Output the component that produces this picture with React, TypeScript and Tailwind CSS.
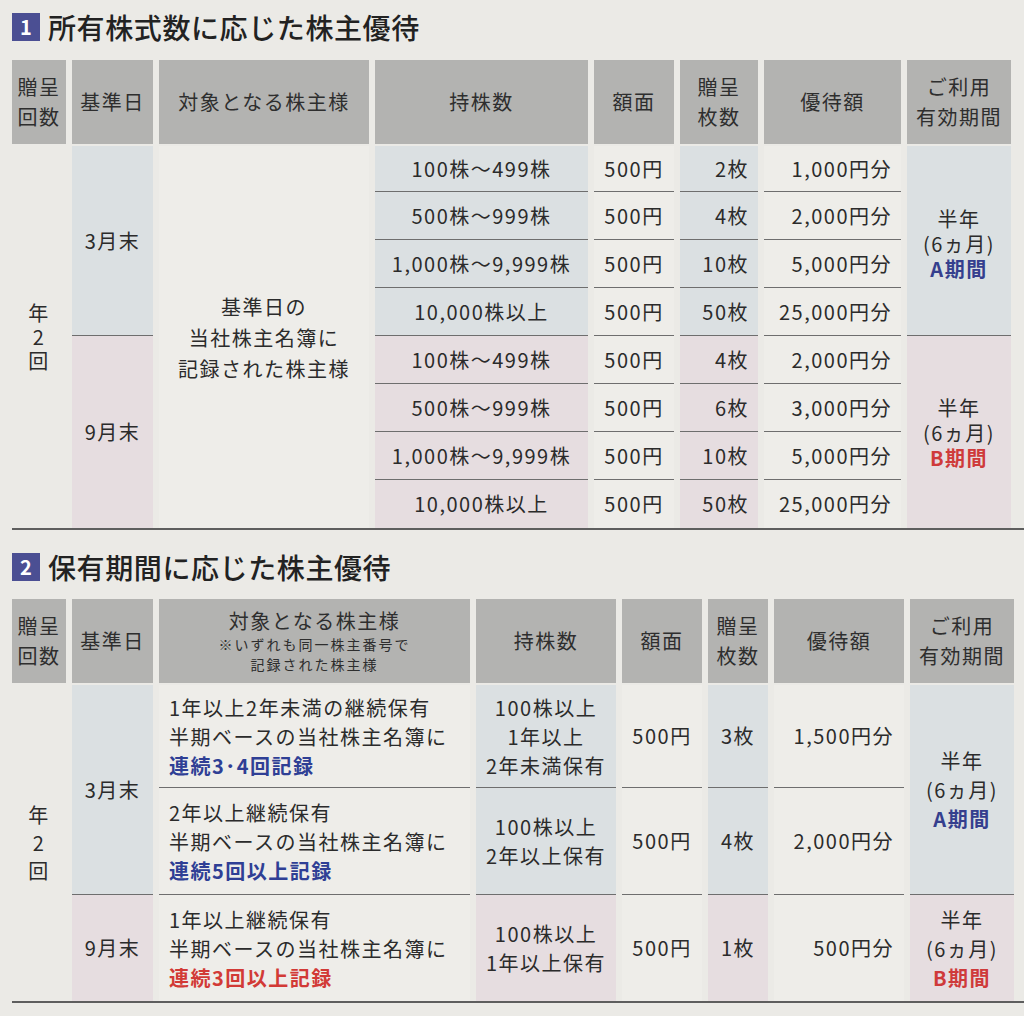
import React from "react";

const BLUE = "bg-[#dbe0e2]";
const PINK = "bg-[#e6dde0]";
const PLAIN = "bg-[#eeede9]";
const LINE = "border-b border-[#6e6e6e]";

const Head = ({ w, children }: { w: string; children: React.ReactNode }) => (
  <div
    className={`${w} h-[84px] shrink-0 bg-[#b3b3b1] flex flex-col items-center justify-center text-center text-[20px] tracking-[1.5px] leading-[30px] text-[#2e2e2e]`}
  >
    {children}
  </div>
);

const Title = ({ num, text }: { num: string; text: string }) => (
  <div className="flex items-center gap-[8px] h-[28px]">
    <div className="w-[28px] h-[28px] bg-[#4b4f93] text-white flex items-center justify-center text-[20px] font-bold leading-none">
      {num}
    </div>
    <h2 className="text-[28px] leading-[28px] font-medium tracking-[0.6px] text-[#222]">
      {text}
    </h2>
  </div>
);

const Period = ({ kind }: { kind: "A" | "B" }) => (
  <>
    <span>半年</span>
    <span>(6ヵ月)</span>
    <span
      className={
        kind === "A"
          ? "font-bold text-[#353f8e]"
          : "font-bold text-[#cf3a3a]"
      }
    >
      {kind}期間
    </span>
  </>
);

// 年2回 stacked vertically
const Yearly = ({ lh }: { lh: string }) => (
  <div className={`w-[54px] flex flex-col items-center justify-center ${lh}`}>
    <span>年</span>
    <span>2</span>
    <span>回</span>
  </div>
);

const table1Rows = [
  ["100株～499株", "2枚", "1,000円分"],
  ["500株～999株", "4枚", "2,000円分"],
  ["1,000株～9,999株", "10枚", "5,000円分"],
  ["10,000株以上", "50枚", "25,000円分"],
  ["100株～499株", "4枚", "2,000円分"],
  ["500株～999株", "6枚", "3,000円分"],
  ["1,000株～9,999株", "10枚", "5,000円分"],
  ["10,000株以上", "50枚", "25,000円分"],
];

function Table1() {
  const cell = (i: number) =>
    `${i === 0 ? "h-[46px]" : "h-[48px]"} ${i < 7 ? LINE : ""} flex items-center`;
  return (
    <div>
      <div className="flex gap-[6px]">
        <Head w="w-[54px]">
          <span>贈呈</span>
          <span>回数</span>
        </Head>
        <Head w="w-[81px]">基準日</Head>
        <Head w="w-[210px]">対象となる株主様</Head>
        <Head w="w-[213px]">持株数</Head>
        <Head w="w-[80px]">額面</Head>
        <Head w="w-[78px]">
          <span>贈呈</span>
          <span>枚数</span>
        </Head>
        <Head w="w-[137px]">優待額</Head>
        <Head w="w-[104px]">
          <span>ご利用</span>
          <span>有効期間</span>
        </Head>
      </div>
      <div className="mt-[2px] flex gap-[6px] h-[382px] text-[20px] tracking-[1.5px] text-[#2b2b2b]">
        <Yearly lh="leading-[24px]" />
        <div className="w-[81px] flex flex-col">
          <div className={`h-[190px] ${BLUE} ${LINE} flex items-center justify-center`}>
            3月末
          </div>
          <div className={`h-[192px] ${PINK} flex items-center justify-center`}>
            9月末
          </div>
        </div>
        <div
          className={`w-[210px] ${PLAIN} flex flex-col items-center justify-center leading-[31px]`}
        >
          <span>基準日の</span>
          <span>当社株主名簿に</span>
          <span>記録された株主様</span>
        </div>
        <div className="w-[213px] flex flex-col">
          {table1Rows.map((r, i) => (
            <div key={i} className={`${cell(i)} ${i < 4 ? BLUE : PINK} justify-center`}>
              {r[0]}
            </div>
          ))}
        </div>
        <div className="w-[80px] flex flex-col">
          {table1Rows.map((_, i) => (
            <div key={i} className={`${cell(i)} ${PLAIN} justify-center`}>
              500円
            </div>
          ))}
        </div>
        <div className="w-[78px] flex flex-col">
          {table1Rows.map((r, i) => (
            <div key={i} className={`${cell(i)} ${i < 4 ? BLUE : PINK} justify-end pr-[9px]`}>
              {r[1]}
            </div>
          ))}
        </div>
        <div className="w-[137px] flex flex-col">
          {table1Rows.map((r, i) => (
            <div key={i} className={`${cell(i)} ${PLAIN} justify-end pr-[9px]`}>
              {r[2]}
            </div>
          ))}
        </div>
        <div className="w-[104px] flex flex-col">
          <div
            className={`h-[190px] ${BLUE} ${LINE} flex flex-col items-center justify-center leading-[25px] pt-[6px]`}
          >
            <Period kind="A" />
          </div>
          <div
            className={`h-[192px] ${PINK} flex flex-col items-center justify-center leading-[25px]`}
          >
            <Period kind="B" />
          </div>
        </div>
      </div>
      <div className="h-[2px] bg-[#5e5e5e]" />
    </div>
  );
}

const table2Rows = [
  {
    h: "h-[103px]",
    lines: ["1年以上2年未満の継続保有", "半期ベースの当社株主名簿に"],
    mark: "連続3･4回記録",
    shares: ["100株以上", "1年以上", "2年未満保有"],
    count: "3枚",
    value: "1,500円分",
  },
  {
    h: "h-[107px]",
    lines: ["2年以上継続保有", "半期ベースの当社株主名簿に"],
    mark: "連続5回以上記録",
    shares: ["100株以上", "2年以上保有"],
    count: "4枚",
    value: "2,000円分",
  },
  {
    h: "h-[106px]",
    lines: ["1年以上継続保有", "半期ベースの当社株主名簿に"],
    mark: "連続3回以上記録",
    shares: ["100株以上", "1年以上保有"],
    count: "1枚",
    value: "500円分",
  },
];

function Table2() {
  return (
    <div>
      <div className="flex gap-[6px]">
        <Head w="w-[54px]">
          <span>贈呈</span>
          <span>回数</span>
        </Head>
        <Head w="w-[81px]">基準日</Head>
        <Head w="w-[311px]">
          <span className="leading-[26px]">対象となる株主様</span>
          <span className="text-[14px] leading-[20px] tracking-[2px]">
            ※いずれも同一株主番号で
          </span>
          <span className="text-[14px] leading-[20px] tracking-[2px]">
            記録された株主様
          </span>
        </Head>
        <Head w="w-[140px]">持株数</Head>
        <Head w="w-[80px]">額面</Head>
        <Head w="w-[60px]">
          <span>贈呈</span>
          <span>枚数</span>
        </Head>
        <Head w="w-[130px]">優待額</Head>
        <Head w="w-[104px]">
          <span>ご利用</span>
          <span>有効期間</span>
        </Head>
      </div>
      <div className="mt-[2px] flex gap-[6px] h-[316px] text-[20px] tracking-[1.5px] text-[#2b2b2b]">
        <Yearly lh="leading-[28px]" />
        <div className="w-[81px] flex flex-col">
          <div className={`h-[210px] ${BLUE} ${LINE} flex items-center justify-center`}>
            3月末
          </div>
          <div className={`h-[106px] ${PINK} flex items-center justify-center`}>
            9月末
          </div>
        </div>
        <div className="w-[311px] flex flex-col">
          {table2Rows.map((r, i) => (
            <div
              key={i}
              className={`${r.h} ${PLAIN} ${i < 2 ? LINE : ""} flex flex-col justify-center pl-[10px] leading-[29px]`}
            >
              {r.lines.map((l) => (
                <span key={l}>{l}</span>
              ))}
              <span
                className={
                  i < 2 ? "font-bold text-[#2f3f95]" : "font-bold text-[#d23a36]"
                }
              >
                {r.mark}
              </span>
            </div>
          ))}
        </div>
        <div className="w-[140px] flex flex-col">
          {table2Rows.map((r, i) => (
            <div
              key={i}
              className={`${r.h} ${i < 2 ? BLUE : PINK} ${i < 2 ? LINE : ""} flex flex-col items-center justify-center leading-[29px]`}
            >
              {r.shares.map((s) => (
                <span key={s}>{s}</span>
              ))}
            </div>
          ))}
        </div>
        <div className="w-[80px] flex flex-col">
          {table2Rows.map((r, i) => (
            <div
              key={i}
              className={`${r.h} ${PLAIN} ${i < 2 ? LINE : ""} flex items-center justify-center`}
            >
              500円
            </div>
          ))}
        </div>
        <div className="w-[60px] flex flex-col">
          {table2Rows.map((r, i) => (
            <div
              key={i}
              className={`${r.h} ${i < 2 ? BLUE : PINK} ${i < 2 ? LINE : ""} flex items-center justify-center`}
            >
              {r.count}
            </div>
          ))}
        </div>
        <div className="w-[130px] flex flex-col">
          {table2Rows.map((r, i) => (
            <div
              key={i}
              className={`${r.h} ${PLAIN} ${i < 2 ? LINE : ""} flex items-center justify-end pr-[10px]`}
            >
              {r.value}
            </div>
          ))}
        </div>
        <div className="w-[104px] flex flex-col">
          <div
            className={`h-[210px] ${BLUE} ${LINE} flex flex-col items-center justify-center leading-[29px]`}
          >
            <Period kind="A" />
          </div>
          <div
            className={`h-[106px] ${PINK} flex flex-col items-center justify-center leading-[29px]`}
          >
            <Period kind="B" />
          </div>
        </div>
      </div>
      <div className="h-[2px] bg-[#5e5e5e]" />
    </div>
  );
}

export default function App() {
  return (
    <div className="w-[1024px] h-[1016px] overflow-hidden bg-[#ebeae6] pl-[12px] pt-[13px] font-['Noto_Sans_CJK_JP','Noto_Sans',sans-serif]">
      <Title num="1" text="所有株式数に応じた株主優待" />
      <div className="mt-[19px]">
        <Table1 />
      </div>
      <div className="mt-[23px]">
        <Title num="2" text="保有期間に応じた株主優待" />
      </div>
      <div className="mt-[18px]">
        <Table2 />
      </div>
    </div>
  );
}
